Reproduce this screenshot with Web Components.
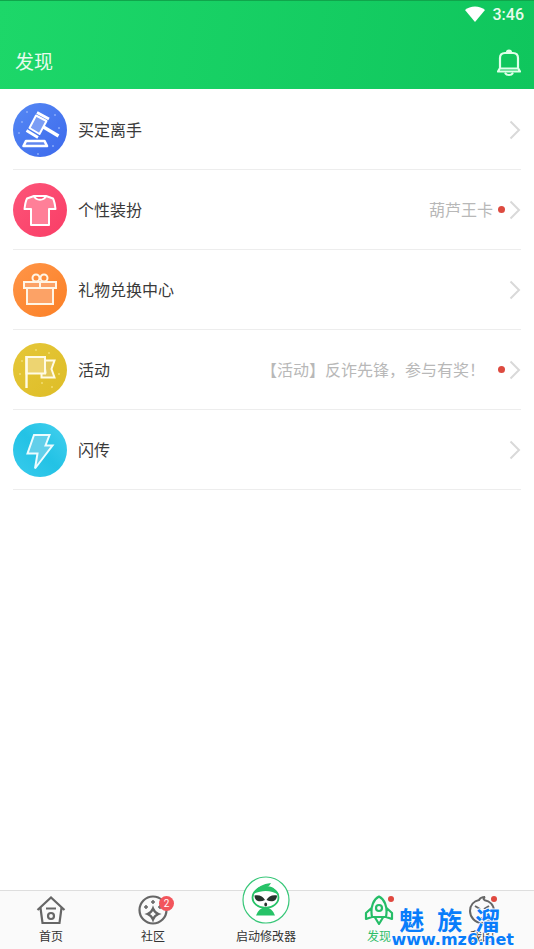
<!DOCTYPE html>
<html lang="zh-CN">
<head>
<meta charset="utf-8">
<meta name="viewport" content="width=device-width, initial-scale=1">
<title>发现</title>
<style>
html, body { margin: 0; height: 100%; }
body { font-family: Roboto, "Noto Sans CJK SC", sans-serif; color: #3a3a3a; background: #fff; }
</style>
</head>
<body>
<discover-app></discover-app>

<template id="t-app">
<style>
:host { display: flex; flex-direction: column; min-height: 100vh; position: relative; overflow: hidden; }
ul { list-style: none; margin: 0; padding: 1px 13px 0; flex: 1; }
li { display: block; }
</style>
<app-header heading="发现" time="3:46"></app-header>
<ul>
<li><menu-row label="买定离手"><svg slot="icon" viewBox="0 0 54 54"><defs><linearGradient id="g" x2="1" y2="1"><stop stop-color="#5588f4"/><stop offset="1" stop-color="#3c69ec"/></linearGradient></defs><circle cx="27" cy="27" r="27" fill="url(#g)"/><g fill="#8aabf8"><circle cx="9" cy="19" r="1"/><circle cx="14" cy="9" r="1"/><circle cx="6" cy="30" r="1"/><circle cx="42" cy="12" r="1"/><circle cx="46" cy="25" r="1"/><circle cx="40" cy="43" r="1"/><circle cx="25" cy="51" r="1"/></g><g stroke="#fff" stroke-width="2" stroke-linejoin="round"><path d="M23 12.500l10.500 5.500-7 13-10-6z" fill="#7b9df5"/><path d="M24 9.500l12 6.500M13.500 27.500l11.500 7" stroke-width="2.800"/><path d="M30.500 24l15 9" stroke-width="3.400"/><path d="M13 38h18.500l2.500 5H10.500z" fill="#5f86ef" stroke-width="2.600"/></g></svg></menu-row></li>
<li><menu-row label="个性装扮" note="葫芦王卡" dot><svg slot="icon" viewBox="0 0 54 54"><defs><linearGradient id="g" x2="1" y2="1"><stop stop-color="#fd5579"/><stop offset="1" stop-color="#f93d66"/></linearGradient></defs><circle cx="27" cy="27" r="27" fill="url(#g)"/><path d="M21 13l-7 2.500c-1 2-2 6-2.500 10.500h6.500V42h18V26h6.500c-.5-4.500-1.500-8.500-2.500-10.500l-7-2.500c-2 5-10 5-12 0z" fill="#ff7f98" stroke="#fff" stroke-width="2" stroke-linejoin="round"/><path d="M21 13h12" stroke="#fff" stroke-width="2"/></svg></menu-row></li>
<li><menu-row label="礼物兑换中心"><svg slot="icon" viewBox="0 0 54 54"><defs><linearGradient id="g" x2="1" y2="1"><stop stop-color="#ff9548"/><stop offset="1" stop-color="#fb8026"/></linearGradient></defs><circle cx="27" cy="27" r="27" fill="url(#g)"/><g fill="#fca266" stroke="#fff5e5" stroke-width="2"><path d="M14 25h26v16H14z"/><path d="M11 19h32v6H11z"/><path d="M27 18v6"/><circle cx="23" cy="15" r="3.500" fill="none"/><circle cx="31" cy="15" r="3.500" fill="none"/></g></svg></menu-row></li>
<li><menu-row label="活动" note="【活动】反诈先锋，参与有奖！  " dot><svg slot="icon" viewBox="0 0 54 54"><defs><linearGradient id="g" x2="1" y2="1"><stop stop-color="#e5c739"/><stop offset="1" stop-color="#debd27"/></linearGradient></defs><circle cx="27" cy="27" r="27" fill="url(#g)"/><g fill="#f2dc72"><circle cx="23" cy="7" r="1"/><circle cx="9" cy="18" r="1"/><circle cx="36" cy="10" r="1"/><circle cx="46" cy="31" r="1"/><circle cx="29" cy="40" r="1"/><circle cx="39" cy="44" r="1"/><circle cx="7" cy="31" r="1"/></g><g fill="#edd471" stroke="#fffbe5" stroke-width="2"><path d="M31 17.500h10.500l-3 8.500 3 8.500H28.500v-5h4z" fill="#e2c85b"/><path d="M13.500 14H32v16.500H13.500z"/><path d="M13.500 13v32" stroke-width="2.400"/></g></svg></menu-row></li>
<li><menu-row label="闪传"><svg slot="icon" viewBox="0 0 54 54"><defs><linearGradient id="g" x1="1" x2="0" y2="1"><stop stop-color="#45d1ef"/><stop offset=".5" stop-color="#23c2e5"/><stop offset="1" stop-color="#3acbed"/></linearGradient></defs><circle cx="27" cy="27" r="27" fill="url(#g)"/><path d="M21 12h15.500l-4 10.500h7L22 45.500l2.500-15H14.500z" fill="#62cfea" stroke="#ecfcff" stroke-width="2"/></svg></menu-row></li>
</ul>
<tab-bar></tab-bar>
<site-mark></site-mark>
</template>

<template id="t-header">
<style>
:host { display: block; background: linear-gradient(100deg, #1dd769, #0fc65d); color: #fff; box-shadow: inset 0 1px #10a54b; }
.status { display: flex; justify-content: flex-end; align-items: center; gap: 8px; height: 28px; padding-right: 10px; font-size: 16px; font-weight: 500; color: #e9fbed; }
.title { display: flex; align-items: center; justify-content: space-between; height: 61px; padding: 8px 13px 0 15px; box-sizing: border-box; }
h1 { margin: 0; font-size: 19px; line-height: 28px; font-weight: 400; color: #e9fbed; }
button { padding: 0; border: 0; background: none; display: flex; }
svg { display: block; }
</style>
<div class="status"><svg width="20" height="16" viewBox="0 0 20 16"><path d="M0 4C5-.8 15-.8 20 4L10 16z" fill="#fff"/></svg><time></time></div>
<div class="title"><h1></h1><button type="button" aria-label="通知"><svg width="24" height="28" viewBox="0 0 24 28" fill="none" stroke="#dfffe9" stroke-width="2.200" stroke-linejoin="round" stroke-linecap="round"><path d="M3 19V9c0-3 2-5 5-5h8c3 0 5 2 5 5v10l2 3.500H1zM3 19.500h18"/><path d="M10 3.500a2 2 0 0 1 4 0" fill="#eafff0"/><path d="M8.500 24.500c1 2 6 2 7 0"/></svg></button></div>
</template>

<template id="t-row">
<style>
:host { display: block; }
a { display: flex; align-items: center; height: 80px; box-sizing: border-box; border-bottom: 1px solid #ededed; color: inherit; text-decoration: none; }
::slotted(svg) { width: 54px; height: 54px; flex: none; }
.label, .note { font-size: 16px; line-height: 24px; padding-top: 2px; white-space: pre; }
.label { margin-left: 11px; flex: 1; }
.note { color: #b8b8b8; }
.dot { display: none; width: 7px; height: 7px; margin-left: 5px; border-radius: 50%; background: #dd4a3f; }
:host([dot]) .dot { display: block; }
.arrow { width: 12px; height: 20px; margin-left: 4px; }
</style>
<a href="#"><slot name="icon"></slot><span class="label"></span><span class="note"></span><span class="dot"></span><svg class="arrow" viewBox="0 0 12 20" fill="none" stroke="#d9d9d9" stroke-width="2"><path d="M1.500 1.500l8.500 8.500-8.500 8.500"/></svg></a>
</template>

<template id="t-bar">
<style>
:host { display: block; }
nav { display: grid; grid-template-columns: 51fr 51fr 62fr 51fr 52fr; height: 59px; box-sizing: border-box; border-top: 1px solid #dedede; background: #fafafa; }
</style>
<nav>
<tab-item label="首页"><svg slot="icon" width="30" height="30" viewBox="0 0 30 30" fill="none" stroke="#666" stroke-width="2.200"><path d="M1.500 15L15 2.500 28.500 15M4.500 13l2 15h17l2-15M10 13.500h10"/><circle cx="15" cy="21" r="3"/></svg></tab-item>
<tab-item label="社区" badge="2"><svg slot="icon" width="30" height="30" viewBox="0 0 30 30" fill="none" stroke="#666" stroke-width="2.200"><circle cx="15" cy="15" r="13.500"/><path d="M15 13.500q1.500 4 5.500 5.500-4 1.500-5.500 5.500-1.500-4-5.500-5.500 4-1.500 5.500-5.500z"/><path d="M15 5v4M13 7h4M8 10v4M6 12h4M22 10v4M20 12h4" stroke-width="1.500"/></svg></tab-item>
<tab-item label="启动修改器" raised><svg slot="icon" width="48" height="48" viewBox="0 0 48 48"><circle cx="24" cy="24" r="23" fill="#fff" stroke="#39c779" stroke-width="1.200"/><path d="M14 39.500q3-8 9.500-8t9.500 8z" fill="#27c368"/><ellipse cx="23.500" cy="21.500" rx="13" ry="10.500" fill="#fff" stroke="#27c368" stroke-width="1.800"/><path d="M11 18c3-6 9-10 18-11-1 2-2 3-4 4 6 0 10 3 12 8-8-5-17-5-26-1z" fill="#27c368"/><g fill="#26332d"><path d="M12.500 19.500c5-1 8.500 1 10.500 4.500-5 2.500-10.500 1.500-10.500-4.500zM35 19.500c-5-1-8.500 1-10.500 4.500 5 2.500 10.500 1.500 10.500-4.500z"/><ellipse cx="23.700" cy="28.500" rx="1.400" ry="2"/></g></svg></tab-item>
<tab-item label="发现" active dot><svg slot="icon" width="30" height="30" viewBox="0 0 30 30" fill="none" stroke="#25bd67" stroke-width="2.200" stroke-linejoin="round"><path d="M8 22C6 11 10 4 15 1.500 20 4 24 11 22 22zM7.500 13L2 18v6l6-2M22.500 13l5.500 5v6l-6-2M11 22.500l4 6.500 4-6.500"/><circle cx="15" cy="13" r="3"/></svg></tab-item>
<tab-item label="我的" dot><svg slot="icon" width="30" height="30" viewBox="0 0 30 30" fill="none" stroke="#666" stroke-width="2"><path d="M17 5c6 1 10 5 10 11s-5 12-12 12S3 22 3 16 7 6 12 5c1-2 3-3 6-3q-2 1-1 3"/><path d="M8 11l5 3M22 11l-5 3M12 23h6"/></svg></tab-item>
</nav>
</template>

<template id="t-tab">
<style>
:host { display: block; color: #333; }
:host([active]) { color: #2fbd69; }
a { display: flex; flex-direction: column; align-items: center; justify-content: flex-end; height: 58px; box-sizing: border-box; padding-bottom: 3px; color: inherit; text-decoration: none; font-size: 12px; line-height: 18px; white-space: nowrap; }
.pic { position: relative; display: flex; margin-bottom: 3px; }
b { display: none; position: absolute; border-radius: 50%; background: #f2555c; color: #fff; font-weight: 400; font-size: 10px; line-height: 15px; text-align: center; }
:host([badge]) b { display: block; width: 15px; height: 15px; top: 1px; right: -6px; }
:host([dot]) b { display: block; width: 6px; height: 6px; top: 1px; right: 0; background: #e0483f; }
:host([raised]) .pic { margin-bottom: 4px; }
</style>
<a href="#"><span class="pic"><slot name="icon"></slot><b></b></span><span class="text"></span></a>
</template>

<template id="t-mark">
<style>
:host { position: absolute; right: 20px; bottom: 0; display: flex; flex-direction: column; align-items: center; color: #087dfb; pointer-events: none; white-space: nowrap; text-shadow: 1px 0 #fafafa, -1px 0 #fafafa, 0 1px #fafafa, 0 -1px #fafafa; }
.name { display: flex; gap: 13px; padding-right: 6px; font: 700 25px/24px "Noto Sans CJK SC", sans-serif; }
.url { font: 700 16px/18px "DejaVu Sans", sans-serif; }
</style>
<span class="name"><span>魅</span><span>族</span><span>溜</span></span>
<span class="url">www.mz6.net</span>
</template>

<script>
class TemplateElement extends HTMLElement {
  constructor() {
    super();
    this.attachShadow({ mode: 'open' }).append(
      document.getElementById(this.constructor.template).content.cloneNode(true));
  }
  fill(selector, attribute) {
    this.shadowRoot.querySelector(selector).textContent = this.getAttribute(attribute) || '';
  }
}
class TabItem extends TemplateElement {
  static template = 't-tab';
  connectedCallback() { this.fill('.text', 'label'); this.fill('b', 'badge'); }
}
class MenuRow extends TemplateElement {
  static template = 't-row';
  connectedCallback() {
    this.fill('.label', 'label');
    this.fill('.note', 'note');
    const gradient = this.querySelector('linearGradient');
    gradient.id = 'tint-' + MenuRow.count++;
    this.querySelector('circle').setAttribute('fill', `url(#${gradient.id})`);
  }
  static count = 0;
}
class AppHeader extends TemplateElement {
  static template = 't-header';
  connectedCallback() { this.fill('h1', 'heading'); this.fill('time', 'time'); }
}
class TabBar extends TemplateElement { static template = 't-bar'; }
class SiteMark extends TemplateElement { static template = 't-mark'; }
class DiscoverApp extends TemplateElement { static template = 't-app'; }
customElements.define('tab-item', TabItem);
customElements.define('menu-row', MenuRow);
customElements.define('app-header', AppHeader);
customElements.define('tab-bar', TabBar);
customElements.define('site-mark', SiteMark);
customElements.define('discover-app', DiscoverApp);
</script>
</body>
</html>
